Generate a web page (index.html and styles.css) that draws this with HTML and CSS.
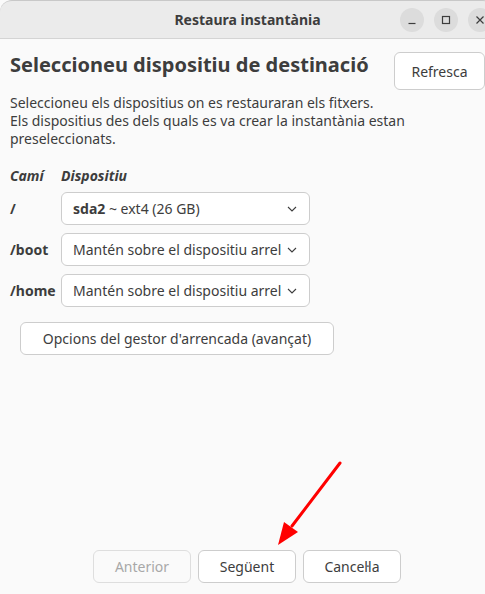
FILE: index.html
```html
<!DOCTYPE html>
<html lang="ca">
<head>
<meta charset="utf-8">
<title>Restaura instantània</title>
<link rel="stylesheet" href="styles.css">
</head>
<body>
<div class="window">
  <header class="titlebar">
    <div class="title">Restaura instantània</div>
    <div class="controls">
      <span class="ctl"><svg width="10" height="10" viewBox="0 0 10 10"><path d="M1.5 8.5h7" stroke="#3d3d3d" stroke-width="1.2"/></svg></span>
      <span class="ctl"><svg width="10" height="10" viewBox="0 0 10 10"><rect x="1.5" y="1.5" width="7" height="7" fill="none" stroke="#3d3d3d" stroke-width="1.2"/></svg></span>
      <span class="ctl"><svg width="10" height="10" viewBox="0 0 10 10"><path d="M1.5 1.5l7 7M8.5 1.5l-7 7" stroke="#3d3d3d" stroke-width="1.2"/></svg></span>
    </div>
  </header>
  <main class="content">
    <div class="head-row">
      <h1 class="heading">Seleccioneu dispositiu de destinació</h1>
      <button class="btn refresh">Refresca</button>
    </div>
    <p class="desc">Seleccioneu els dispositius on es restauraran els fitxers.<br>Els dispositius des dels quals es va crear la instantània estan preseleccionats.</p>
    <div class="table">
      <div class="th">Camí</div>
      <div class="th">Dispositiu</div>
      <div class="path">/</div>
      <div class="combo"><span class="val"><b>sda2</b> ~ ext4 (26 GB)</span><svg class="chev" width="10" height="6" viewBox="0 0 10 6"><path d="M1 1l4 4 4-4" fill="none" stroke="#3d3d3d" stroke-width="1.1"/></svg></div>
      <div class="path">/boot</div>
      <div class="combo"><span class="val">Mantén sobre el dispositiu arrel</span><svg class="chev" width="10" height="6" viewBox="0 0 10 6"><path d="M1 1l4 4 4-4" fill="none" stroke="#3d3d3d" stroke-width="1.1"/></svg></div>
      <div class="path">/home</div>
      <div class="combo"><span class="val">Mantén sobre el dispositiu arrel</span><svg class="chev" width="10" height="6" viewBox="0 0 10 6"><path d="M1 1l4 4 4-4" fill="none" stroke="#3d3d3d" stroke-width="1.1"/></svg></div>
    </div>
    <button class="btn boot">Opcions del gestor d'arrencada (avançat)</button>
  </main>
  <footer class="footer">
    <button class="btn nav" disabled>Anterior</button>
    <button class="btn nav">Següent</button>
    <button class="btn nav">Cancel·la</button>
  </footer>
  <svg class="arrow" width="80" height="100" viewBox="0 0 80 100">
    <path d="M70 8L22 71" stroke="#ff0000" stroke-width="3" stroke-linecap="round"/>
    <path d="M8 90L14 67 28 77Z" fill="#ff0000"/>
  </svg>
</div>
</body>
</html>
```

FILE: styles.css
```css
* { box-sizing: border-box; }
html, body {
  margin: 0;
  padding: 0;
  width: 485px;
  height: 594px;
  overflow: hidden;
  background: #fafafa;
}
body {
  font-family: "Noto Sans", "DejaVu Sans", sans-serif;
  color: #3d3d3d;
  font-size: 14px;
}
.window {
  width: 495px;
  height: 594px;
  display: flex;
  flex-direction: column;
  background: #fafafa;
  position: relative;
}
.titlebar {
  height: 39px;
  flex: none;
  background: #ebebeb;
  border-bottom: 1px solid #d4d4d4;
  border-top: 1px solid #c8c8c8;
  border-radius: 12px 12px 0 0;
  position: relative;
  display: flex;
  align-items: center;
  justify-content: flex-end;
  padding-right: 3px;
}
.title {
  position: absolute;
  left: 0;
  right: 0;
  text-align: center;
  font-weight: bold;
  font-size: 14px;
  color: #3d3d3d;
}
.controls {
  display: flex;
  gap: 10px;
  position: relative;
}
.ctl {
  width: 24px;
  height: 24px;
  border-radius: 50%;
  background: #dcdcdc;
  display: flex;
  align-items: center;
  justify-content: center;
}
.content {
  flex: 1;
  padding: 13px 10px 0 10px;
}
.head-row {
  display: flex;
  justify-content: space-between;
  align-items: flex-start;
}
.heading {
  margin: 0;
  font-size: 20px;
  font-weight: bold;
  line-height: 26px;
  color: #3d3d3d;
}
.btn {
  font-family: inherit;
  font-size: 14px;
  color: #3d3d3d;
  background: #ffffff;
  border: 1px solid #cdcdcd;
  border-radius: 6px;
  padding: 0;
}
.refresh {
  width: 91px;
  height: 38px;
}
.desc {
  margin: 4px 0 0 0;
  line-height: 18px;
  font-size: 14px;
}
.table {
  margin-top: 19px;
  display: grid;
  grid-template-columns: 51px 249px;
  row-gap: 8px;
  align-items: center;
}
.th {
  font-style: italic;
  font-weight: bold;
  font-size: 14px;
  line-height: 18px;
  margin-bottom: -1px;
}
.path {
  font-weight: bold;
  font-size: 14px;
}
.combo {
  height: 33px;
  background: #ffffff;
  border: 1px solid #cdcdcd;
  border-radius: 6px;
  display: flex;
  align-items: center;
  justify-content: space-between;
  padding: 0 12px 0 11px;
}
.chev { flex: none; }
.boot {
  margin: 15px 0 0 10px;
  width: 314px;
  height: 33px;
}
.footer {
  flex: none;
  height: 44px;
  display: flex;
  gap: 7px;
  padding-left: 93px;
  align-items: flex-start;
}
.nav {
  width: 98px;
  height: 33px;
}
.nav:disabled {
  color: #a8a8a8;
  border-color: #dedede;
  background: #fafafa;
}
.arrow {
  position: absolute;
  left: 270px;
  top: 455px;
}
```
